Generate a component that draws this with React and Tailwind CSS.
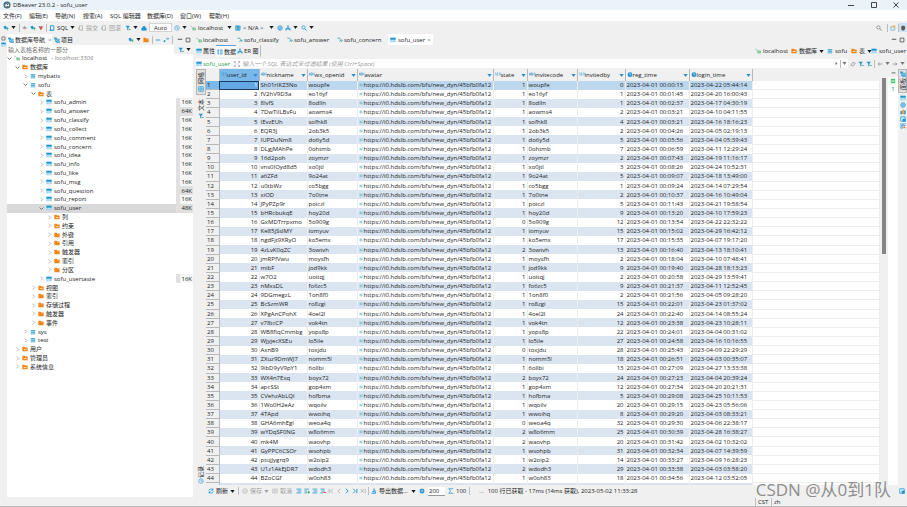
import React from "react";
import clsx from "clsx";

const BLUE = "#1e96d2";
const ORANGE = "#f08418";

const drawings = {
  table: (
    <>
      <rect x="1" y="2" width="14" height="12" fill="#8fd0f2" />
      <rect x="1" y="2" width="14" height="5" fill={BLUE} />
      <path d="M1 10.5h14M8 7v7" stroke="#fff" strokeWidth="1" />
    </>
  ),
  folder: (
    <>
      <path d="M1 2h6l2 2h6v10H1z" fill={ORANGE} />
      <path d="M8 5h6" stroke="#ffd29c" strokeWidth="1.5" />
    </>
  ),
  folderTable: (
    <>
      <path d="M1 2h6l2 2h6v10H1z" fill={ORANGE} />
      <path d="M5 8h7v3H5z" fill="#ffd9ad" />
    </>
  ),
  db: (
    <>
      <path d="M2 3h12v2H2zM2 7h12v3H2zM2 12h12v2H2z" fill={BLUE} />
      <path d="M3 5h10v2H3zM3 10h10v2H3z" fill="#7cc4ea" />
    </>
  ),
  conn: (
    <>
      <path d="M1 3c4 0 5 3 6 6" stroke="#7f9fb0" strokeWidth="1.6" fill="none" />
      <rect x="7" y="7" width="8" height="7" fill="#3fae6a" />
      <rect x="9" y="9" width="4" height="3" fill="#e6f7ea" />
    </>
  ),
  script: (
    <>
      <path d="M1 3h6l2 4" stroke="#38a8a0" strokeWidth="2.2" fill="none" />
      <path d="M7 12l3-4 5 1" stroke={BLUE} strokeWidth="2.2" fill="none" />
      <path d="M10 12h4" stroke="#5dbb6c" strokeWidth="2" />
    </>
  ),
  plug: (
    <>
      <path d="M1 4l6-2 3 4v4l-5 2z" fill={BLUE} />
      <path d="M9 9h6M12 6v8" stroke="#3fae6a" strokeWidth="2" />
    </>
  ),
  plugGray: <path d="M2 8l5-5 3 3v4H6zM10 8h4" fill="#9a9a9a" stroke="#9a9a9a" strokeWidth="1.4" />,
  plugRed: (
    <>
      <path d="M2 3l6 1 5-2-2 8-4 4z" fill="#e0524a" />
      <path d="M3 3l3 6" stroke={BLUE} strokeWidth="2" />
    </>
  ),
  sql: <path d="M4 2h9v12H4zM1 14h8" fill="none" stroke={BLUE} strokeWidth="2.4" />,
  doc: <path d="M4 2h8v12H4zM1 5v8M9 10l4 4" fill="none" stroke="#a9a9a9" strokeWidth="1.8" />,
  funnel: (
    <>
      <path d="M1 2h12L9 7v7H6V7z" fill={BLUE} />
      <path d="M11 12h4" stroke="#3fae6a" strokeWidth="3" />
    </>
  ),
  lock: <path d="M2 8h12v6H2zM5 8V4h6v4" fill={BLUE} stroke={BLUE} strokeWidth="1.5" />,
  clock: (
    <>
      <circle cx="8" cy="8" r="6" fill="#dff0fa" stroke="#55a9d6" strokeWidth="2" />
      <path d="M8 4v4l3 2" stroke="#55a9d6" strokeWidth="2" fill="none" />
    </>
  ),
  globe: (
    <>
      <circle cx="8" cy="8" r="6" fill="#d8eefb" stroke={BLUE} strokeWidth="2" />
      <path d="M8 2v12M2 8h12" stroke={BLUE} strokeWidth="1.6" />
    </>
  ),
  tree: <path d="M8 2v6M3 13V9h10v4M6 3h4M1 13h4M11 13h4M8 8v5" stroke={BLUE} strokeWidth="2.4" fill="none" />,
  book: <path d="M2 2h5v12H2zM9 2l5 1-1 11H9zM4 6h8" fill="#8fcdec" stroke={BLUE} strokeWidth="2" />,
  search: (
    <>
      <circle cx="6.5" cy="6.5" r="4.5" fill="none" stroke={BLUE} strokeWidth="2" />
      <path d="M10 10l5 5" stroke={BLUE} strokeWidth="2.4" />
    </>
  ),
  searchGray: (
    <>
      <circle cx="6.5" cy="6.5" r="4.5" fill="none" stroke="#7a7a7a" strokeWidth="1.8" />
      <path d="M10 10l5 5" stroke="#7a7a7a" strokeWidth="2" />
    </>
  ),
  persp: (
    <>
      <path d="M2 4h11v10H2z" fill="#cfe6f4" stroke="#8aa6b8" strokeWidth="1.6" />
      <path d="M8 1h6v6H8z" fill="#f0b84a" />
    </>
  ),
  beaver: (
    <>
      <circle cx="8" cy="8" r="7" fill="#3d6f86" />
      <path d="M4 11c0-4 2-6 5-6s4 3 3 6z" fill="#f3efe8" />
      <circle cx="9" cy="7" r="1.2" fill="#4a3124" />
      <path d="M7 10h4v3H7z" fill="#8c6a50" />
    </>
  ),
  beaverBrown: <path d="M3 4l3-2h5l3 3-1 7-4 3-5-2z" fill="#66584f" />,
  nav: (
    <>
      <path d="M1 2h6v4H1zM4 6v7h3M7 5h7v4H7zM7 11h8v4H7z" fill={BLUE} stroke={BLUE} strokeWidth="1" />
      <path d="M8 7h5M8 13h5" stroke="#c8e8f8" strokeWidth="1.4" />
    </>
  ),
  data: <path d="M1 3h5M3 3v10h3M8 3h7M8 8h7M8 13h7" stroke={BLUE} strokeWidth="2.4" fill="none" />,
  arrows: <path d="M1 11h6M4 8v6M8 5h7l-3-3" stroke={BLUE} strokeWidth="2.2" fill="none" />,
  dash: <path d="M2 8h12" stroke={BLUE} strokeWidth="2.4" />,
  min: <path d="M2 6h12" stroke="#444" strokeWidth="2.4" />,
  max: <path d="M3 3h10v10H3z" stroke="#444" strokeWidth="2" fill="none" />,
  expand: <path d="M1 5V2h4M11 2h4v3M1 11v3h4M11 14h4v-3M4 8h2M10 8h2" stroke="#777" strokeWidth="2" fill="none" />,
  eraser: <path d="M2 11l6-8 6 3-5 7H4z" stroke="#8a8a8a" strokeWidth="1.8" fill="#e6e6e6" />,
  left: <path d="M14 8H3M7 4L3 8l4 4" stroke="#8a8a8a" strokeWidth="2" fill="none" />,
  right: <path d="M2 8h11M9 4l4 4-4 4" stroke="#8a8a8a" strokeWidth="2" fill="none" />,
  play: <path d="M5 3l6 5-6 5z" fill="#666" />,
  refresh: <path d="M2 7c1-5 8-6 11-2M13 1v5H9M14 9c-1 5-8 6-11 2M3 15v-5h4" stroke={BLUE} strokeWidth="2.2" fill="none" />,
  okGray: (
    <>
      <circle cx="8" cy="8" r="6" fill="none" stroke="#a9a9a9" strokeWidth="1.8" />
      <path d="M5 8l2 2 4-4" stroke="#a9a9a9" strokeWidth="1.6" fill="none" />
    </>
  ),
  boxGray: <path d="M2 3h12v10H2zM6 6l4 4M10 6l-4 4" stroke="#a9a9a9" strokeWidth="1.6" fill="none" />,
  rowEdit: <path d="M1 3h13M4 8h10M1 13h13" stroke={BLUE} strokeWidth="2.2" />,
  rowAdd: (
    <>
      <path d="M1 3h12M1 8h7M1 13h7" stroke={BLUE} strokeWidth="2.2" />
      <path d="M9 11h7M12.500 8v7" stroke="#2fa84f" strokeWidth="2.4" />
    </>
  ),
  rowDel: (
    <>
      <path d="M1 3h12M4 8h9M1 13h7" stroke={BLUE} strokeWidth="2.2" />
      <path d="M9 12h7" stroke="#e0524a" strokeWidth="2.8" />
    </>
  ),
  first: <path d="M3 2v12M13 2L7 8l6 6" stroke="#a0a0a0" strokeWidth="1.8" fill="none" />,
  prev: <path d="M11 2L5 8l6 6" stroke="#a0a0a0" strokeWidth="1.8" fill="none" />,
  next: <path d="M5 2l6 6-6 6" stroke={BLUE} strokeWidth="2.4" fill="none" />,
  last: <path d="M3 2l6 6-6 6M13 2v12" stroke={BLUE} strokeWidth="2.4" fill="none" />,
  stop: <path d="M2 3l8 10M10 3L2 13M14 2v12" stroke="#a0a0a0" strokeWidth="1.6" fill="none" />,
  exportIcon: <path d="M8 1v9M3 10h9v4H1M8 4l4 3" stroke={BLUE} strokeWidth="2.4" fill="none" />,
  gear: (
    <>
      <path d="M8 1v14M1 8h14M3 3l10 10M13 3L3 13" stroke={BLUE} strokeWidth="2.8" />
      <circle cx="8" cy="8" r="4.500" fill={BLUE} />
      <circle cx="8" cy="8" r="1.800" fill="#fff" />
    </>
  ),
  count: <path d="M2 2h12M2 2l5 6-5 6h12" stroke={BLUE} strokeWidth="2" fill="none" />,
  grid: <path d="M2 2h12v12H2zM8 2v12M2 8h12" stroke={BLUE} strokeWidth="2" fill="#e4f4fc" />,
  calc: (
    <>
      <path d="M2 2h12v12H2z" fill="#4ac776" />
      <path d="M4 8h8" stroke="#fff" strokeWidth="2.4" />
    </>
  ),
  chart: (
    <>
      <path d="M1 5h4v9H1zM11 4h4v10h-4z" fill={BLUE} />
      <path d="M6 2h4v12H6z" fill={ORANGE} />
    </>
  ),
  panel: (
    <>
      <path d="M2 2h12v12H2z" fill="#e2f3fc" stroke={BLUE} strokeWidth="2" />
      <path d="M7 7h8v8H7z" fill={BLUE} />
    </>
  ),
  quad: (
    <>
      <path d="M2 2h5v5H2zM9 2h5v5H9zM2 9h5v5H2z" fill="none" stroke={BLUE} strokeWidth="1.6" />
      <path d="M9 9h5v5H9z" fill={ORANGE} />
    </>
  ),
  num: (
    <path
      d="M1 3l1.500-1v7M5 2.500h3V5L5 8.500h3.500M11 2.500h3.500L12.500 5c3 0 2.500 4-1.500 3.500"
      stroke="#3a9fd6"
      strokeWidth="1.5"
      fill="none"
    />
  ),
  abc: (
    <path
      d="M0.500 9L2.500 2l2 7M1 7h3M6 2v7h2.500c2 0 2-3.500 0-3.500H6M6 2h2c2 0 2 3.500 0 3.500M15.500 3c-5-2-5 7 0 5"
      stroke="#3a9fd6"
      strokeWidth="1.5"
      fill="none"
    />
  ),
  date: (
    <>
      <circle cx="8" cy="7" r="6.500" fill={BLUE} />
      <path d="M8 3v4l3 1" stroke="#d9f0fc" strokeWidth="1.8" fill="none" />
    </>
  ),
  link: <path d="M2 5h12M2 11h12" stroke="#4fb0de" strokeWidth="3" />,
};

function Icon({ name, size = 6, className }) {
  return (
    <svg viewBox="0 0 16 16" width={size} height={size} className={clsx("shrink-0", className)} aria-hidden="true">
      {drawings[name]}
    </svg>
  );
}

function Caret({ className }) {
  return (
    <svg viewBox="0 0 8 5" width="5" height="3" className={clsx("shrink-0", className)} aria-hidden="true">
      <path d="M0.500 0h7L4 5z" fill="currentColor" />
    </svg>
  );
}

function Sep({ className }) {
  return <span className={clsx("h-2 w-px shrink-0 bg-[#bdbdbd]", className)} />;
}

function Tool({ icon, label, caret, className, children }) {
  return (
    <button
      type="button"
      aria-label={label || icon}
      className={clsx("flex shrink-0 items-center gap-[2px] whitespace-nowrap", className)}
    >
      {icon && <Icon name={icon} />}
      {children}
      {caret && <Caret className="mr-[3px] ml-auto" />}
    </button>
  );
}

const MENUS = [
  ["文件(F)", "w-[26px]"],
  ["编辑(E)", "w-[26px]"],
  ["导航(N)", "w-[28px]"],
  ["搜索(A)", "w-[27px]"],
  ["SQL 编辑器", "w-[37px]"],
  ["数据库(D)", "w-[33px]"],
  ["窗口(W)", "w-[29px]"],
  ["帮助(H)", "w-[28px]"],
];

function TitleBar() {
  return (
    <header className="flex h-[10px] items-center bg-[#eaf3fa] pl-[3px]">
      <Icon name="beaver" size={8} />
      <span className="ml-[2px]">DBeaver 23.0.2 - sofu_user</span>
      <div className="ml-auto flex items-center text-[#444]">
        <button type="button" aria-label="最小化" className="w-[23px]">
          <svg width="6" height="6" className="mx-auto" viewBox="0 0 6 6"><path d="M0 3.500h6" stroke="currentColor" /></svg>
        </button>
        <button type="button" aria-label="最大化" className="w-[23px]">
          <svg width="6" height="6" className="mx-auto" viewBox="0 0 6 6"><path d="M.5.5h5v5h-5z" fill="none" stroke="currentColor" /></svg>
        </button>
        <button type="button" aria-label="关闭" className="w-[22px]">
          <svg width="6" height="6" className="mx-auto" viewBox="0 0 6 6"><path d="M.5.5l5 5M5.500.5l-5 5" stroke="currentColor" /></svg>
        </button>
      </div>
    </header>
  );
}

function MenuBar() {
  return (
    <nav className="flex h-[11px] items-center bg-white pl-[3px]">
      {MENUS.map(([name, width]) => (
        <button type="button" key={name} className={clsx("text-left whitespace-nowrap", width)}>
          {name}
        </button>
      ))}
    </nav>
  );
}

function Toolbar() {
  return (
    <div className="flex h-[13px] items-center bg-[#f0f0f0] pl-[3px]">
      <Tool icon="plug" label="新建连接" caret className="w-4" />
      <Sep className="mr-[2px]" />
      <Tool icon="plugGray" label="连接" className="w-2" />
      <Tool icon="plug" label="重新连接" className="w-2" />
      <Tool icon="plugRed" label="断开连接" className="w-2" />
      <Sep className="mr-[2px]" />
      <Tool icon="sql" label="SQL" caret className="w-[29px]">SQL</Tool>
      <Tool icon="doc" label="提交" className="w-[23px] text-[#a0a0a0]">提交</Tool>
      <Tool icon="doc" label="回滚" className="w-6 text-[#a0a0a0]">回滚</Tool>
      <Tool icon="funnel" label="事务" caret className="w-4" />
      <Tool icon="lock" label="锁" className="w-2" />
      <select
        aria-label="提交模式"
        className="h-[9px] w-[23px] appearance-none border border-[#d4d4d4] bg-white text-center"
      >
        <option>Auto</option>
      </select>
      <Tool icon="clock" label="历史" caret className="ml-[2px] w-4" />
      <Tool icon="conn" label="localhost" caret className="w-[45px]">localhost</Tool>
      <Tool icon="book" label="N/A" caret className="w-[42px]">&lt; N/A &gt;</Tool>
      <Tool icon="globe" label="网络" className="w-2" />
      <Tool icon="tree" label="结构" caret className="w-4" />
      <Tool icon="search" label="搜索" caret className="w-4" />
      <div className="ml-auto flex items-center">
        <Tool icon="searchGray" label="查找" className="w-[11px]" />
        <Sep className="mr-[2px]" />
        <Tool icon="persp" label="透视图" className="w-2" />
        <Sep />
        <Tool icon="beaverBrown" label="DBeaver" className="h-[9px] w-2 justify-center bg-[#cce4f7]" />
      </div>
    </div>
  );
}

const LEVELS = ["pl-0", "pl-[8px]", "pl-[16px]", "pl-[24px]", "pl-[32px]", "pl-[40px]"];

const t = (name, size = "16K") => ({ level: 4, icon: "table", name, size });
const f = (level, name, icon = "folder", open = false) => ({ level, icon, name, open });

const TREE = [
  { level: 0, icon: "conn", name: "localhost", note: "- localhost:3306", open: true },
  f(1, "数据库", "folderTable", true),
  f(2, "mybatis", "db"),
  f(2, "sofu", "db", true),
  f(3, "表", "folderTable", true),
  t("sofu_admin"),
  t("sofu_answer", "64K"),
  t("sofu_classify"),
  t("sofu_collect"),
  t("sofu_comment"),
  t("sofu_concern"),
  t("sofu_idea"),
  t("sofu_info"),
  t("sofu_like"),
  t("sofu_msg"),
  t("sofu_question", "64K"),
  t("sofu_report"),
  { ...t("sofu_user", "48K"), open: true, selected: true },
  f(5, "列", "folderTable"),
  f(5, "约束", "folderTable"),
  f(5, "外键"),
  f(5, "引用"),
  f(5, "触发器"),
  f(5, "索引"),
  f(5, "分区"),
  t("sofu_usertaste"),
  f(3, "视图", "folderTable"),
  f(3, "索引"),
  f(3, "存储过程"),
  f(3, "触发器"),
  f(3, "事件"),
  f(2, "sys", "db"),
  f(2, "test", "db"),
  f(1, "用户", "folderTable"),
  f(1, "管理员", "folderTable"),
  f(1, "系统信息", "folderTable"),
];

function Navigator() {
  return (
    <aside className="flex w-[186px] shrink-0 flex-col bg-white">
      <div className="flex h-[11px] items-center bg-[#f0f0f0]">
        <button type="button" className="flex h-full w-[45px] items-center gap-px bg-white pl-px whitespace-nowrap">
          <Icon name="nav" />
          数据库导航
          <span className="ml-[2px] text-[#777]">×</span>
        </button>
        <button type="button" className="flex items-center gap-px pl-[2px]">
          <Icon name="nav" />
          项目
        </button>
        <div className="ml-auto flex items-center">
          <Tool icon="plug" label="连接" caret className="w-[15px]" />
          <Tool icon="folder" label="文件夹" className="w-[9px]" />
          <Sep className="mr-[2px]" />
          <Tool icon="dash" label="折叠" className="w-2" />
          <Tool icon="arrows" label="链接" className="w-[9px]" />
          <Sep className="mr-1" />
          <Tool icon="min" label="最小化" className="w-2" />
          <Tool icon="max" label="最大化" className="w-2" />
        </div>
      </div>
      <div className="flex h-[9px] items-center bg-[#f0f0f0]">
        <input
          aria-label="输入表格名称的一部分"
          placeholder="输入表格名称的一部分"
          className="h-full min-w-0 flex-1 bg-white pl-px placeholder:text-[#6f6f6f]"
        />
        <Tool icon="funnel" label="过滤器" caret className="ml-1 w-[15px]" />
      </div>
      <ul className="flex h-[317px] flex-col">
        {TREE.map((n, i) => (
          <li
            key={i}
            className={clsx("flex min-h-0 flex-1 items-center", LEVELS[n.level], n.selected && "bg-[#d9d9d9]")}
          >
            <svg viewBox="0 0 8 8" width="5" height="5" className="mr-[2px] shrink-0">
              <path d={n.open ? "M1 2.500l3 3 3-3" : "M3 1l3 3-3 3"} fill="none" stroke={n.open ? "#555" : "#a5a5a5"} strokeWidth="1.3" />
            </svg>
            <Icon name={n.icon} className="mr-[2px]" />
            <span className="whitespace-nowrap">{n.name}</span>
            {n.note && <span className="ml-1 text-[#8a8a8a] italic">{n.note}</span>}
            {n.size && (
              <span
                className={clsx(
                  "ml-auto flex h-full w-[17px] items-center justify-end pr-px",
                  n.size === "16K" ? "border-l-4 border-[#e0e0e0] bg-[#f5f5f5]" : "bg-[#e0e0e0]",
                )}
              >
                {n.size}
              </span>
            )}
          </li>
        ))}
      </ul>
    </aside>
  );
}

const TABS = [
  ["conn", "localhost", "w-[41px]"],
  ["script", "sofu_classify", "w-[50px]"],
  ["script", "sofu_answer", "w-[50px]"],
  ["script", "sofu_concern", "w-[51px]"],
];

function EditorTabs() {
  return (
    <div className="flex h-[11px] items-center bg-[#f0f0f0] pl-px">
      {TABS.map(([icon, name, width]) => (
        <button type="button" key={name} className={clsx("flex items-center gap-px whitespace-nowrap", width)}>
          <Icon name={icon} />
          {name}
        </button>
      ))}
      <button type="button" className="flex h-full items-center gap-[2px] bg-white px-[2px]">
        <Icon name="table" />
        sofu_user
        <span className="text-[#777]">×</span>
      </button>
      <div className="ml-auto flex items-center">
        <Tool icon="min" label="最小化" className="w-2" />
        <Tool icon="max" label="最大化" className="w-2" />
      </div>
    </div>
  );
}

function SubTabs() {
  return (
    <div className="mb-[2px] flex h-3 items-center bg-[#f0f0f0] pl-px">
      <button type="button" className="flex w-5 items-center gap-px whitespace-nowrap">
        <Icon name="table" />
        属性
      </button>
      <button
        type="button"
        className="flex h-full w-5 items-center gap-px border-t border-[#5a9fd8] bg-[#f8f8f8] pl-px whitespace-nowrap"
      >
        <Icon name="data" />
        数据
      </button>
      <button
        type="button"
        className="ml-px flex h-full w-6 items-center gap-px border-r border-[#c4bcb4] whitespace-nowrap"
      >
        <Icon name="tree" />
        ER 图
      </button>
      <div className="ml-auto flex items-center">
        <Tool icon="conn" label="localhost" className="w-9">localhost</Tool>
        <Tool icon="folderTable" label="数据库" caret className="w-[36px]">数据库</Tool>
        <Tool icon="db" label="sofu" className="w-6">sofu</Tool>
        <Tool icon="folderTable" label="表" caret className="w-5">表</Tool>
        <Tool icon="table" label="sofu_user" className="w-9">sofu_user</Tool>
      </div>
    </div>
  );
}

function FilterRow() {
  return (
    <div className="flex h-[9px] items-center bg-[#f0f0f0] pl-px">
      <label htmlFor="sqlfilter" className="flex h-full items-center gap-px bg-white pr-1 text-[#2b9a46]">
        <Icon name="table" />
        sofu_user
      </label>
      <div className="flex h-full min-w-0 flex-1 items-center bg-white">
        <Icon name="expand" className="mr-[2px]" />
        <input
          id="sqlfilter"
          placeholder="输入一个 SQL 表达式来过滤结果 (使用 Ctrl+Space)"
          className="min-w-0 flex-1 italic placeholder:text-[#9a9a9a]"
        />
        <Icon name="play" size={5} />
        <Sep className="mx-px" />
        <Caret className="mr-px text-[#777]" />
      </div>
      <div className="flex w-[59px] items-center pl-[2px]">
        <Tool icon="eraser" label="清除" className="w-2" />
        <Tool icon="funnel" label="过滤" className="w-2" />
        <Tool icon="funnel" label="自定义" className="w-2" />
        <Sep className="mr-[2px]" />
        <Tool icon="left" label="后退" caret className="w-[15px] text-[#777]" />
        <Tool icon="right" label="前进" caret className="w-[15px] text-[#777]" />
      </div>
    </div>
  );
}

const COLUMNS = [
  ["user_id", "num", "w-[40px]"],
  ["nickname", "abc", "w-[48px]"],
  ["wx_openid", "abc", "w-[50px]"],
  ["avatar", "abc", "w-[136px]"],
  ["state", "num", "w-[34px]"],
  ["invitecode", "abc", "w-[50px]"],
  ["invitedby", "num", "w-[48px]"],
  ["reg_time", "date", "w-[64px]"],
  ["login_time", "date", "w-[63px]"],
];

const AVATAR = "https://i0.hdslb.com/bfs/new_dyn/45bfb0fa12";

// nickname, openid (also the invite code), state, invited by, registered, last login
const ROWS = [
  ["Sh01rIKZ3No", "woupfe", 1, 0, "00:00:15", "04-22 05:44:14"],
  ["fV2hV9D3a", "eo16yf", 1, 1, "00:01:45", "04-20 16:00:43"],
  ["8IvfS", "8odlln", 1, 1, "00:02:37", "04-17 04:30:19"],
  ["7DwTiILBvFu", "aowms4", 1, 2, "00:03:21", "04-10 04:11:55"],
  ["IEvzEUh", "sofhk8", 1, 4, "00:03:21", "04-16 18:16:23"],
  ["EQR3j", "2ob3k5", 1, 2, "00:04:26", "04-05 02:19:13"],
  ["IUPDuNm8", "do6y5d", 1, 5, "00:05:56", "04-04 05:39:43"],
  ["DLgjMAhPe", "0ohtmb", 1, 7, "00:06:59", "04-11 12:29:24"],
  ["16d2poh", "zoymzr", 1, 2, "00:07:43", "04-19 11:16:17"],
  ["vns0IOyd8d5", "xo0jtl", 1, 3, "00:08:26", "04-24 10:52:31"],
  ["a6ZFd", "9o24at", 1, 5, "00:09:07", "04-18 13:49:00"],
  ["u0tbWz", "co5bgg", 1, 1, "00:09:24", "04-14 07:29:54"],
  ["xiOD", "7o0tne", 1, 2, "00:10:37", "04-16 10:49:04"],
  ["JPyPZp9r", "poiczl", 1, 5, "00:11:43", "04-21 19:58:54"],
  ["bHRcbukqE", "hoy20d", 1, 9, "00:13:20", "04-10 17:59:23"],
  ["GxMDTrrpxmo", "5o909g", 0, 12, "00:13:54", "04-22 22:32:22"],
  ["Ke85jSslMY", "iomyuv", 1, 15, "00:15:02", "04-29 16:42:12"],
  ["ngdFjt9XRyO", "ko5emx", 1, 17, "00:15:35", "04-07 19:17:20"],
  ["4zLvK0qZC", "3owtvh", 2, 13, "00:16:40", "04-13 18:10:41"],
  ["jmRPfVwu", "moysfh", 1, 2, "00:18:04", "04-10 07:48:41"],
  ["mibF", "jod9kk", 1, 9, "00:19:40", "04-28 18:13:23"],
  ["w7O2", "uoitqj", 1, 2, "00:20:58", "04-29 13:59:41"],
  ["nMxsDL", "fo6zc5", 1, 9, "00:21:37", "04-11 12:52:45"],
  ["9DGmegzL", "1on8f0", 1, 2, "00:21:56", "04-05 09:28:20"],
  ["BcSzmWR", "ro8zgi", 1, 15, "00:22:01", "04-23 01:37:02"],
  ["XPgAnCPohX", "4oel2l", 1, 24, "00:22:40", "04-14 08:55:24"],
  ["v78tcCP", "vok4tn", 1, 12, "00:23:38", "04-23 10:28:11"],
  ["WB8fIqCmmbg", "yops8p", 1, 22, "00:24:01", "04-04 00:31:02"],
  ["WjyjecXSEu", "lo5ile", 1, 27, "00:24:58", "04-16 10:16:55"],
  ["AxnB9", "toxjdu", 0, 28, "00:25:43", "04-09 22:29:29"],
  ["ZXuz9DmWJ7", "nomm5l", 1, 18, "00:26:51", "04-03 00:35:07"],
  ["9ibD9yV9pY1", "6ollbi", 1, 13, "00:27:09", "04-27 13:33:38"],
  ["WX4n7Exq", "boyx72", 2, 24, "00:27:23", "04-04 20:39:24"],
  ["apcSSt", "gop4xm", 1, 12, "00:27:34", "04-20 20:21:31"],
  ["CVehzAbLQl", "hofbma", 1, 5, "00:29:08", "04-25 10:11:53"],
  ["1Wo0H2eAz", "wqoilv", 1, 20, "00:29:15", "04-23 05:56:06"],
  ["4TApd", "wwoihq", 1, 8, "00:29:20", "04-03 08:33:21"],
  ["GHA6mhEgI", "weoa4q", 0, 32, "00:29:30", "04-06 22:38:17"],
  ["wYDqSF0NG", "w8o6mm", 2, 25, "00:30:39", "04-28 16:38:27"],
  ["mk4M", "waovhp", 2, 20, "00:31:42", "04-02 10:32:02"],
  ["GyPPC6CSOr", "wsohpb", 1, 31, "00:32:34", "04-07 14:39:59"],
  ["ptujJygrq9", "w2oip2", 1, 14, "00:33:27", "04-09 16:28:23"],
  ["U1z1AkEjDR7", "wdodh3", 2, 29, "00:33:38", "04-03 03:58:20"],
  ["BZoCGf", "w0oh83", 1, 18, "00:34:56", "04-12 03:52:05"],
  ["g3JLCh", "w6oh2l", 1, 9, "00:35:03", "04-06 15:08:31"],
];

function DataGrid() {
  return (
    <div className="min-w-0 flex-1 overflow-hidden bg-white">
      <table className="h-[424px] w-full table-fixed border-collapse whitespace-nowrap">
        <thead>
          <tr className="h-3 bg-[#f0f0f0] text-left">
            <th className="w-[13px] border-r border-[#b8b8b8] p-0" />
            {COLUMNS.map(([name, icon, width]) => (
              <th
                key={name}
                className={clsx(
                  "border-r border-[#b8b8b8] p-0 font-normal",
                  width,
                  name === "user_id" && "bg-[#79b8e8]",
                )}
              >
                <div className="flex items-center pl-px">
                  <Icon name={icon} />
                  {name}
                  <Caret className="mr-px ml-auto text-[#2a8fc8]" />
                </div>
              </th>
            ))}
            <th className="p-0" />
          </tr>
        </thead>
        <tbody>
          {ROWS.map(([nick, code, state, by, reg, login], i) => (
            <tr
              key={i}
              className={clsx(
                "leading-[8px] [&>td]:border-r [&>td]:border-[#ededed] [&>td]:px-px [&>td]:py-0",
                i === 0 ? "[&>td]:bg-[#bdd7ee]" : i % 2 === 0 && "[&>td]:bg-[#dbe5f1]",
              )}
            >
              <th
                className={clsx(
                  "border-r border-b border-[#b8b8b8] p-0 pl-px text-left font-normal",
                  i === 0 ? "bg-[#79b8e8]" : "bg-[#f0f0f0]",
                )}
              >
                {i + 1}
              </th>
              {i === 0 ? (
                <td className="bg-[#63a8e2]! text-right text-white outline outline-offset-[-1px] outline-[#1d3b5c]">1</td>
              ) : (
                <td className="text-right">{i + 1}</td>
              )}
              <td>{nick}</td>
              <td>{code}</td>
              <td>
                <div className="flex items-center gap-px">
                  <Icon name="link" size={4} />
                  {AVATAR}
                </div>
              </td>
              <td className="text-right">{state}</td>
              <td>{code}</td>
              <td className="text-right">{by}</td>
              <td>2023-04-01 {reg}</td>
              <td>2023-{login}</td>
              <td className="border-b bg-white!" />
            </tr>
          ))}
        </tbody>
      </table>
    </div>
  );
}

function SideLabel({ children }) {
  return <span className="rotate-180 [writing-mode:vertical-rl] [text-orientation:sideways]">{children}</span>;
}

function ResultArea() {
  return (
    <div className="mt-px flex min-h-0 flex-1">
      <div className="flex w-[11px] shrink-0 flex-col items-center bg-[#f0f0f0]">
        <button type="button" className="flex h-[26px] w-[10px] flex-col items-center justify-center gap-[2px] border border-[#b5b5b5] bg-[#e2e2e2]">
          <SideLabel>网格</SideLabel>
          <Icon name="grid" />
        </button>
        <button type="button" className="mt-1 flex flex-col items-center gap-[2px]">
          <SideLabel>文本</SideLabel>
          <Icon name="funnel" />
        </button>
        <button type="button" className="mt-auto mb-px flex flex-col items-center">
          <SideLabel>记录</SideLabel>
          <Icon name="clock" />
        </button>
      </div>
      <DataGrid />
      <div className="w-2 shrink-0 bg-[#f0f0f0] pt-[9px]">
        <div className="mx-auto h-[176px] w-1 bg-[#858585]" />
      </div>
      <div className="flex w-[10px] shrink-0 flex-col items-center bg-white">
        <div className="flex h-2 w-full items-center justify-center bg-[#f0f0f0]">
          <Icon name="min" size={5} />
        </div>
        <Icon name="calc" className="mt-px" />
        <span className="mt-px text-[#2c5a8c]">1</span>
      </div>
      <div className="flex w-[9px] shrink-0 flex-col items-center bg-[#f0f0f0]">
        <button type="button" className="flex h-6 w-full flex-col items-center gap-px border border-[#b5b5b5] bg-[#e2e2e2] pt-px">
          <Icon name="nav" />
          <SideLabel>面板</SideLabel>
        </button>
        <div className="mt-[2px] flex flex-col gap-px">
          <Icon name="table" />
          <Icon name="globe" />
          <Icon name="chart" />
          <Icon name="panel" />
          <Icon name="quad" />
        </div>
      </div>
    </div>
  );
}

function ResultBar() {
  return (
    <div className="flex h-3 items-center bg-[#f0f0f0] pl-[13px]">
      <Tool icon="refresh" label="刷新" caret className="w-[30px]">刷新</Tool>
      <Sep className="mr-[3px]" />
      <Tool icon="okGray" label="保存" caret className="w-[30px] text-[#a0a0a0]">保存</Tool>
      <Tool icon="boxGray" label="取消" className="w-6 text-[#a0a0a0]">取消</Tool>
      <Tool icon="rowEdit" label="编辑行" className="w-2" />
      <Tool icon="rowAdd" label="添加行" className="w-2" />
      <Tool icon="rowEdit" label="复制行" className="w-2" />
      <Tool icon="rowDel" label="删除行" className="w-2" />
      <Tool icon="first" label="首行" className="w-2" />
      <Tool icon="prev" label="上一行" className="w-2" />
      <Tool icon="next" label="下一行" className="w-2" />
      <Tool icon="last" label="末行" className="w-2" />
      <Tool icon="stop" label="停止" className="w-2" />
      <Sep className="mr-[2px]" />
      <Tool icon="exportIcon" label="导出数据" caret className="w-[48px]">导出数据…</Tool>
      <Tool icon="gear" label="设置" className="w-[9px]" />
      <input aria-label="每页行数" defaultValue="200" className="h-[9px] w-[17px] border-b border-[#999] bg-white pl-px" />
      <Tool icon="count" label="行数" className="ml-[3px] w-[21px]">100</Tool>
      <Sep />
      <span className="ml-[9px] text-[#777]">…</span>
      <span className="ml-1 whitespace-nowrap">100 行已获取 - 17ms (14ms 获取), 2023-05-02 11:33:28</span>
      <Icon name="panel" className="mr-[2px] ml-auto" />
    </div>
  );
}

export default function App() {
  return (
    <div className="relative flex h-screen flex-col overflow-hidden bg-[#f0f0f0] font-['Open_Sans','Noto_Sans_CJK_SC',sans-serif] text-[6px] leading-[8px] text-[#1c1c1c]">
      <TitleBar />
      <MenuBar />
      <Toolbar />
      <div className="flex min-h-0 flex-1">
        <div className="flex w-[7px] shrink-0 flex-col items-center gap-px pt-[2px]">
          <Icon name="max" size={5} />
          <Icon name="table" size={5} />
        </div>
        <Navigator />
        <main className="ml-[2px] flex min-w-0 flex-1 flex-col">
          <EditorTabs />
          <SubTabs />
          <FilterRow />
          <ResultArea />
          <ResultBar />
        </main>
      </div>
      <footer className="flex h-[10px] items-center justify-end border-b border-[#b9b9b9]">
        <Sep className="mr-[2px]" />
        <span className="w-[13px]">CST</span>
        <Sep className="mr-[2px]" />
        <span className="w-[133px]">zh</span>
      </footer>
      <div className="pointer-events-none absolute right-4 bottom-[7px] text-[17px] leading-[20px] whitespace-nowrap text-[#8e8e8e]">
        CSDN @从0到1队
      </div>
    </div>
  );
}
